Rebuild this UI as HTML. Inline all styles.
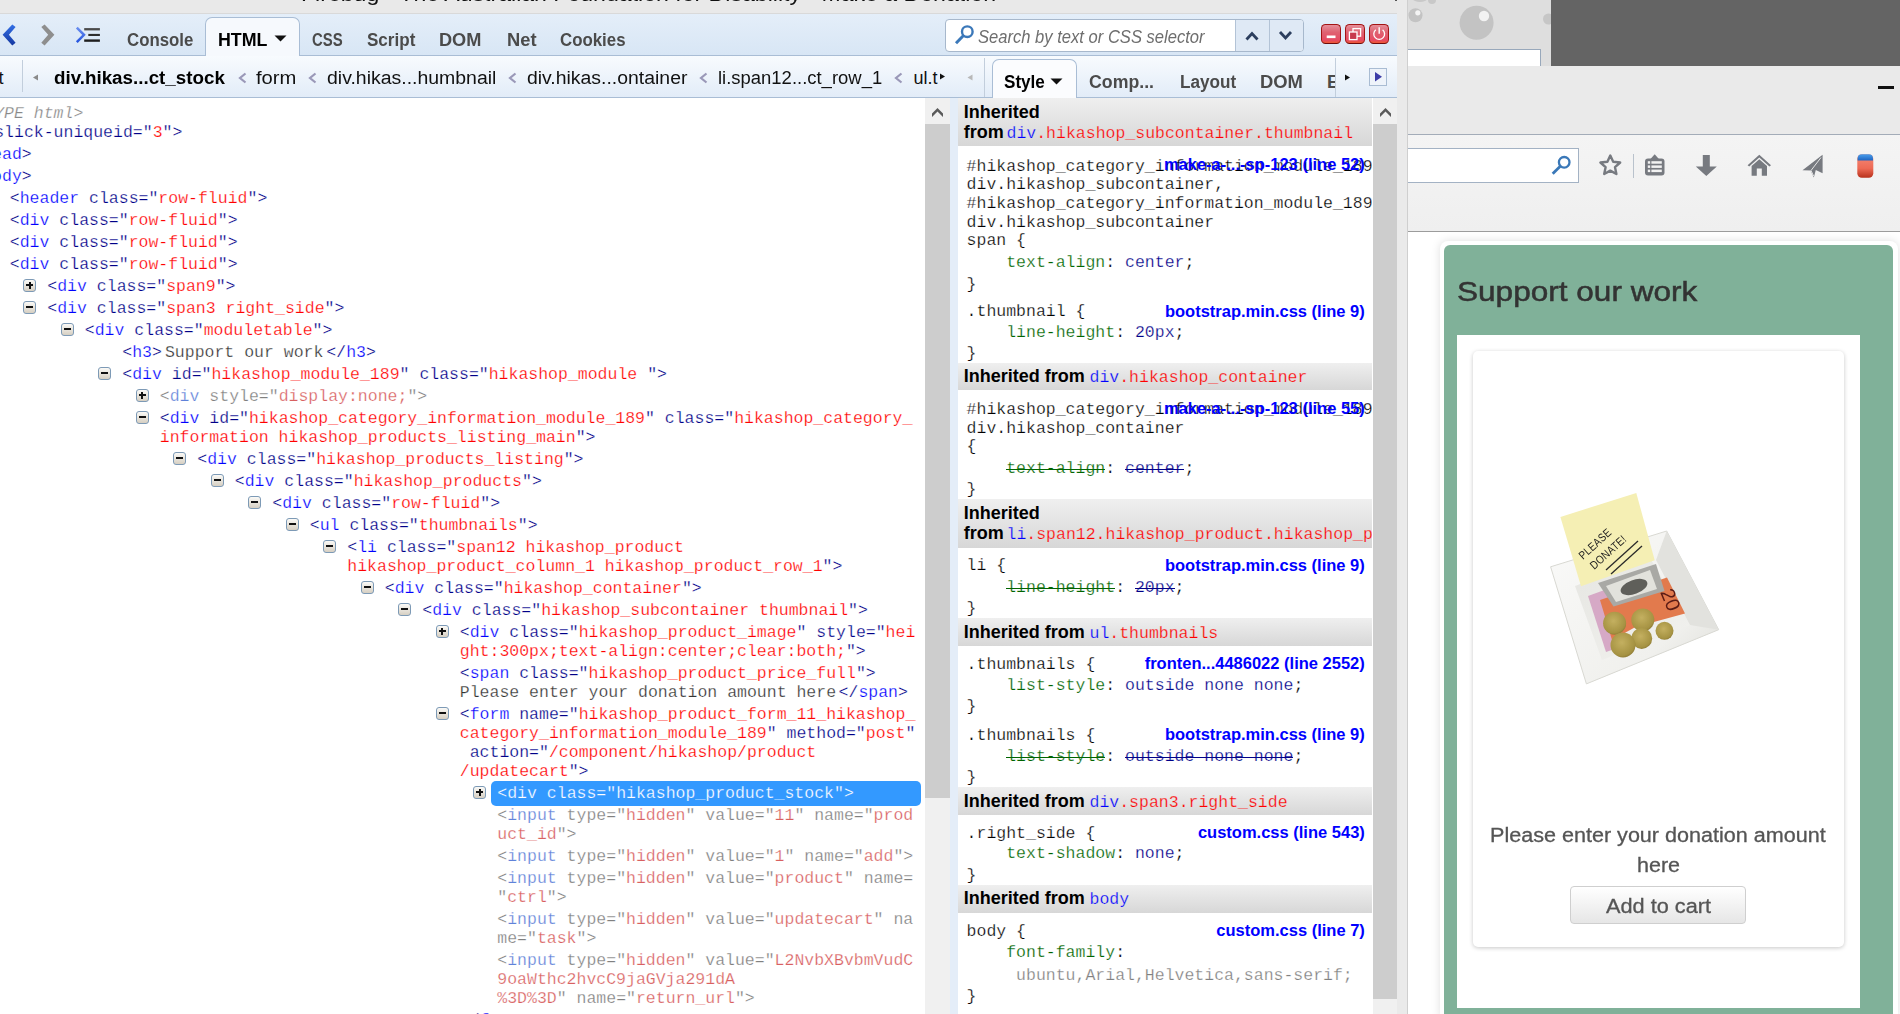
<!DOCTYPE html>
<html><head><meta charset="utf-8"><title>Firebug</title>
<style>html,body{margin:0;padding:0;width:1900px;height:1014px;overflow:hidden;background:#fff;position:relative}
body{font-family:"Liberation Sans",sans-serif}</style></head>
<body>
<div style="position:absolute;left:0px;top:0px;width:1397px;height:14px;background:#e9e9e9;"></div>
<div style="position:absolute;left:0px;top:13px;width:1397px;height:1px;background:#d9d9d9;"></div>
<div style="position:absolute;top:-6.50px;font-family:'Liberation Sans';font-size:20px;line-height:0;white-space:pre;left:301.00px;color:#111;transform:scaleX(1.1542);transform-origin:0 0;">Firebug - The Australian Foundation for Disability - Make a Donation</div>
<div style="position:absolute;left:0px;top:14px;width:1397px;height:41px;background:linear-gradient(#e4eef9,#d8e6f5);"></div>
<div style="position:absolute;left:0px;top:55px;width:1397px;height:1px;background:#a9bdd5;"></div>
<div style="position:absolute;left:205px;top:17px;width:95px;height:39px;background:#f6f9fd;border:1px solid #a9bdd5;border-bottom:none;border-radius:7px 7px 0 0;box-sizing:border-box;"></div>
<svg style="position:absolute;left:0;top:14px" width="110" height="41" viewBox="0 14 110 41">
<defs><linearGradient id="gblue" x1="0" y1="0" x2="0" y2="1"><stop offset="0" stop-color="#3470e6"/><stop offset="1" stop-color="#1437a0"/></linearGradient>
<linearGradient id="gblue2" x1="0" y1="0" x2="0" y2="1"><stop offset="0" stop-color="#6a8ef0"/><stop offset="1" stop-color="#2453de"/></linearGradient></defs>
<polygon points="2.6,34.8 12.3,24.4 15.6,27 8.9,34.8 15.6,42.7 12.3,45.4" fill="url(#gblue)"/>
<polygon points="54.4,34.8 44.6,24.4 41.3,27 48.2,34.8 41.3,42.7 44.6,45.4" fill="#8e8e8e"/>
<polyline points="76.8,27.6 84,34.8 76.8,42.2" fill="none" stroke="url(#gblue2)" stroke-width="2.5"/>
<rect x="84.2" y="28.1" width="15.7" height="2.3" fill="#4a4a4a"/>
<rect x="88.3" y="33.9" width="11.6" height="2.1" fill="#2e2e2e"/>
<rect x="84.2" y="39.4" width="15.7" height="2.4" fill="#1e1e1e"/>
</svg>
<div style="position:absolute;top:39.80px;font-family:'Liberation Sans';font-size:18px;line-height:0;white-space:pre;font-weight:bold;left:127.40px;color:#4b4b4b;transform:scaleX(0.9338);transform-origin:0 0;">Console</div>
<div style="position:absolute;top:39.80px;font-family:'Liberation Sans';font-size:18px;line-height:0;white-space:pre;font-weight:bold;left:217.90px;color:#000;transform:scaleX(0.9900);transform-origin:0 0;">HTML</div>
<svg style="position:absolute;left:274px;top:35px" width="13" height="7"><polygon points="0.5,0.5 12.5,0.5 6.5,6.5" fill="#111"/></svg>
<div style="position:absolute;top:39.80px;font-family:'Liberation Sans';font-size:18px;line-height:0;white-space:pre;font-weight:bold;left:312.20px;color:#4b4b4b;transform:scaleX(0.8297);transform-origin:0 0;">CSS</div>
<div style="position:absolute;top:39.80px;font-family:'Liberation Sans';font-size:18px;line-height:0;white-space:pre;font-weight:bold;left:366.50px;color:#4b4b4b;transform:scaleX(0.9471);transform-origin:0 0;">Script</div>
<div style="position:absolute;top:39.80px;font-family:'Liberation Sans';font-size:18px;line-height:0;white-space:pre;font-weight:bold;left:439.20px;color:#4b4b4b;transform:scaleX(1.0095);transform-origin:0 0;">DOM</div>
<div style="position:absolute;top:39.80px;font-family:'Liberation Sans';font-size:18px;line-height:0;white-space:pre;font-weight:bold;left:506.60px;color:#4b4b4b;transform:scaleX(1.0172);transform-origin:0 0;">Net</div>
<div style="position:absolute;top:39.80px;font-family:'Liberation Sans';font-size:18px;line-height:0;white-space:pre;font-weight:bold;left:559.70px;color:#4b4b4b;transform:scaleX(0.9357);transform-origin:0 0;">Cookies</div>
<div style="position:absolute;left:945px;top:19px;width:359px;height:33px;background:#fff;border:1px solid #a7b8cc;border-radius:4px;box-sizing:border-box;"></div>
<div style="position:absolute;left:1235px;top:20px;width:68px;height:31px;background:#dfe9f5;border-left:1px solid #b3c3d6;box-sizing:border-box;border-radius:0 3px 3px 0;"></div>
<div style="position:absolute;left:1269px;top:20px;width:1px;height:31px;background:#b3c3d6;"></div>
<svg style="position:absolute;left:950px;top:22px" width="30" height="26" viewBox="950 22 30 26">
<circle cx="967.3" cy="31.7" r="5.3" fill="none" stroke="#3b78b9" stroke-width="2.4"/>
<line x1="963.5" y1="35.5" x2="956" y2="43.3" stroke="#3b78b9" stroke-width="3" stroke-linecap="butt"/>
</svg>
<div style="position:absolute;top:36.80px;font-family:'Liberation Sans';font-size:18px;line-height:0;white-space:pre;font-style:italic;left:978.30px;color:#6e6e6e;transform:scaleX(0.9208);transform-origin:0 0;">Search by text or CSS selector</div>
<svg style="position:absolute;left:1235px;top:20px" width="68" height="31" viewBox="1235 20 68 31">
<polyline points="1246.5,39.5 1252,33.5 1257.5,39.5" fill="none" stroke="#2c3e5e" stroke-width="2.8"/>
<polyline points="1280,32 1285.5,38 1291,32" fill="none" stroke="#2c3e5e" stroke-width="2.8"/>
</svg>
<div style="position:absolute;left:1320.8px;top:23.8px;width:20.3px;height:20px;background:linear-gradient(#e58f9a,#df6272 40%,#e64a62 85%,#ee5a34);border:1.8px solid #a31414;border-bottom-color:#6e0c0c;border-radius:4.5px;box-sizing:border-box;"></div>
<div style="position:absolute;left:1344.8px;top:23.8px;width:20.3px;height:20px;background:linear-gradient(#e58f9a,#df6272 40%,#e64a62 85%,#ee5a34);border:1.8px solid #a31414;border-bottom-color:#6e0c0c;border-radius:4.5px;box-sizing:border-box;"></div>
<div style="position:absolute;left:1368.8px;top:23.8px;width:20.3px;height:20px;background:linear-gradient(#e58f9a,#df6272 40%,#e64a62 85%,#ee5a34);border:1.8px solid #a31414;border-bottom-color:#6e0c0c;border-radius:4.5px;box-sizing:border-box;"></div>
<svg style="position:absolute;left:1321px;top:24px" width="69" height="20" viewBox="1321 24 69 20">
<rect x="1326.7" y="35.5" width="8.8" height="2.6" fill="#fff"/>
<rect x="1353" y="28.6" width="7.6" height="7.6" fill="none" stroke="#fff" stroke-width="1.3"/>
<rect x="1349.4" y="32" width="7.6" height="7.6" fill="#c83a4e" stroke="#fff" stroke-width="1.3"/>
<path d="M1375.8,29.8 A5.4,5.4 0 1 0 1382.6,29.8" fill="none" stroke="#fff" stroke-width="1.3"/>
<line x1="1379.2" y1="27.2" x2="1379.2" y2="33.8" stroke="#fff" stroke-width="1.4"/>
</svg>
<div style="position:absolute;left:0px;top:56px;width:1397px;height:41px;background:linear-gradient(#f8fbfe,#e2ecf8);"></div>
<div style="position:absolute;left:0px;top:97px;width:1397px;height:1px;background:#a9bdd5;"></div>
<div style="position:absolute;top:77.60px;font-family:'Liberation Sans';font-size:18px;line-height:0;white-space:pre;left:-1.50px;color:#111;">t</div>
<div style="position:absolute;left:22px;top:60px;width:1px;height:32px;background:#c2cedc;"></div>
<svg style="position:absolute;left:32px;top:74px" width="8" height="8"><polygon points="1,3.5 6,0.5 6,6.5" fill="#8a8a8a"/></svg>
<div style="position:absolute;top:77.60px;font-family:'Liberation Sans';font-size:18px;line-height:0;white-space:pre;font-weight:bold;left:54.00px;color:#000;transform:scaleX(1.0435);transform-origin:0 0;">div.hikas...ct_stock</div>
<svg style="position:absolute;left:237.5px;top:72px" width="10" height="12"><polyline points="7.5,1.5 2,6 7.5,10.5" fill="none" stroke="#9a98b8" stroke-width="2.2"/></svg>
<svg style="position:absolute;left:308px;top:72px" width="10" height="12"><polyline points="7.5,1.5 2,6 7.5,10.5" fill="none" stroke="#9a98b8" stroke-width="2.2"/></svg>
<svg style="position:absolute;left:508px;top:72px" width="10" height="12"><polyline points="7.5,1.5 2,6 7.5,10.5" fill="none" stroke="#9a98b8" stroke-width="2.2"/></svg>
<svg style="position:absolute;left:699px;top:72px" width="10" height="12"><polyline points="7.5,1.5 2,6 7.5,10.5" fill="none" stroke="#9a98b8" stroke-width="2.2"/></svg>
<svg style="position:absolute;left:893.5px;top:72px" width="10" height="12"><polyline points="7.5,1.5 2,6 7.5,10.5" fill="none" stroke="#9a98b8" stroke-width="2.2"/></svg>
<div style="position:absolute;top:77.60px;font-family:'Liberation Sans';font-size:18px;line-height:0;white-space:pre;left:255.60px;color:#111;transform:scaleX(1.1222);transform-origin:0 0;">form</div>
<div style="position:absolute;top:77.60px;font-family:'Liberation Sans';font-size:18px;line-height:0;white-space:pre;left:326.80px;color:#111;transform:scaleX(1.0807);transform-origin:0 0;">div.hikas...humbnail</div>
<div style="position:absolute;top:77.60px;font-family:'Liberation Sans';font-size:18px;line-height:0;white-space:pre;left:526.80px;color:#111;transform:scaleX(1.0783);transform-origin:0 0;">div.hikas...ontainer</div>
<div style="position:absolute;top:77.60px;font-family:'Liberation Sans';font-size:18px;line-height:0;white-space:pre;left:717.70px;color:#111;transform:scaleX(1.0254);transform-origin:0 0;">li.span12...ct_row_1</div>
<div style="position:absolute;left:905px;top:60px;width:33px;height:36px;overflow:hidden">
<div style="position:absolute;top:17.60px;font-family:'Liberation Sans';font-size:18px;line-height:0;white-space:pre;left:8.50px;color:#111;">ul.thumbnails</div>
</div>
<svg style="position:absolute;left:939px;top:73px" width="8" height="8"><polygon points="1,0.5 6,3.5 1,6.5" fill="#111"/></svg>
<svg style="position:absolute;left:966px;top:74px" width="8" height="8"><polygon points="1.5,3.5 6.5,0.5 6.5,6.5" fill="#b8b8b8"/></svg>
<div style="position:absolute;left:984px;top:58px;width:1px;height:39px;background:#c2cedc;"></div>
<div style="position:absolute;left:992px;top:59px;width:85px;height:39px;background:#fbfcfe;border:1px solid #a9bdd5;border-bottom:none;border-radius:7px 7px 0 0;box-sizing:border-box;"></div>
<div style="position:absolute;top:81.70px;font-family:'Liberation Sans';font-size:18px;line-height:0;white-space:pre;font-weight:bold;left:1003.70px;color:#000;transform:scaleX(0.9488);transform-origin:0 0;">Style</div>
<svg style="position:absolute;left:1050px;top:78px" width="14" height="8"><polygon points="0.5,0.5 12.5,0.5 6.5,6.5" fill="#111"/></svg>
<div style="position:absolute;top:81.70px;font-family:'Liberation Sans';font-size:18px;line-height:0;white-space:pre;font-weight:bold;left:1089.00px;color:#4b4b4b;transform:scaleX(0.9848);transform-origin:0 0;">Comp...</div>
<div style="position:absolute;top:81.70px;font-family:'Liberation Sans';font-size:18px;line-height:0;white-space:pre;font-weight:bold;left:1179.70px;color:#4b4b4b;transform:scaleX(0.9525);transform-origin:0 0;">Layout</div>
<div style="position:absolute;top:81.70px;font-family:'Liberation Sans';font-size:18px;line-height:0;white-space:pre;font-weight:bold;left:1259.60px;color:#4b4b4b;transform:scaleX(1.0214);transform-origin:0 0;">DOM</div>
<div style="position:absolute;left:1320px;top:60px;width:14.5px;height:36px;overflow:hidden">
<div style="position:absolute;top:21.70px;font-family:'Liberation Sans';font-size:18px;line-height:0;white-space:pre;font-weight:bold;left:7.00px;color:#4b4b4b;">Events</div>
</div>
<div style="position:absolute;left:1334.5px;top:58px;width:1px;height:39px;background:#c2cedc;"></div>
<svg style="position:absolute;left:1344px;top:74px" width="8" height="8"><polygon points="1,0.5 6,3.5 1,6.5" fill="#111"/></svg>
<div style="position:absolute;left:1369px;top:68px;width:18px;height:17.5px;background:#eef3fa;border:1px solid #a9bcd3;box-sizing:border-box;"></div>
<svg style="position:absolute;left:1369px;top:68px" width="18" height="18"><polygon points="6,4 13,8.7 6,13.4" fill="#3d3da8"/></svg>
<div style="position:absolute;left:0;top:98px;width:925px;height:916px;background:#fff;overflow:hidden">
<div style="position:absolute;top:15.50px;font-family:'Liberation Mono';font-size:16.5px;line-height:0;white-space:pre;left:-5.80px;-webkit-text-stroke:0.25px #fff;"><span style="color:#888888;font-style:italic">YPE html&gt;</span></div>
<div style="position:absolute;top:34.50px;font-family:'Liberation Mono';font-size:16.5px;line-height:0;white-space:pre;left:-5.80px;-webkit-text-stroke:0.25px #fff;"><span style="color:#000088;">slick-uniqueid=&quot;</span><span style="color:#ff0000;">3</span><span style="color:#000088;">&quot;&gt;</span></div>
<div style="position:absolute;top:56.50px;font-family:'Liberation Mono';font-size:16.5px;line-height:0;white-space:pre;left:-27.70px;-webkit-text-stroke:0.25px #fff;"><span style="color:#000088;">&lt;</span><span style="color:#0000ff;">head</span><span style="color:#000088;">&gt;</span></div>
<div style="position:absolute;top:78.50px;font-family:'Liberation Mono';font-size:16.5px;line-height:0;white-space:pre;left:-27.70px;-webkit-text-stroke:0.25px #fff;"><span style="color:#000088;">&lt;</span><span style="color:#0000ff;">body</span><span style="color:#000088;">&gt;</span></div>
<div style="position:absolute;top:100.50px;font-family:'Liberation Mono';font-size:16.5px;line-height:0;white-space:pre;left:9.80px;-webkit-text-stroke:0.25px #fff;"><span style="color:#000088;">&lt;</span><span style="color:#0000ff;">header</span><span style="color:#000088;"> class=&quot;</span><span style="color:#ff0000;">row-fluid</span><span style="color:#000088;">&quot;</span><span style="color:#000088;">&gt;</span></div>
<div style="position:absolute;top:122.50px;font-family:'Liberation Mono';font-size:16.5px;line-height:0;white-space:pre;left:9.80px;-webkit-text-stroke:0.25px #fff;"><span style="color:#000088;">&lt;</span><span style="color:#0000ff;">div</span><span style="color:#000088;"> class=&quot;</span><span style="color:#ff0000;">row-fluid</span><span style="color:#000088;">&quot;</span><span style="color:#000088;">&gt;</span></div>
<div style="position:absolute;top:144.50px;font-family:'Liberation Mono';font-size:16.5px;line-height:0;white-space:pre;left:9.80px;-webkit-text-stroke:0.25px #fff;"><span style="color:#000088;">&lt;</span><span style="color:#0000ff;">div</span><span style="color:#000088;"> class=&quot;</span><span style="color:#ff0000;">row-fluid</span><span style="color:#000088;">&quot;</span><span style="color:#000088;">&gt;</span></div>
<div style="position:absolute;top:166.50px;font-family:'Liberation Mono';font-size:16.5px;line-height:0;white-space:pre;left:9.80px;-webkit-text-stroke:0.25px #fff;"><span style="color:#000088;">&lt;</span><span style="color:#0000ff;">div</span><span style="color:#000088;"> class=&quot;</span><span style="color:#ff0000;">row-fluid</span><span style="color:#000088;">&quot;</span><span style="color:#000088;">&gt;</span></div>
<div style="position:absolute;left:23.299999999999997px;top:180.5px;width:13px;height:13px;box-sizing:border-box;border:1.5px solid #7d9ab6;border-radius:3px;background:linear-gradient(#fbfaf7,#d6cfc2);"></div>
<div style="position:absolute;left:26.299999999999997px;top:186.0px;width:7px;height:2px;background:#111"></div>
<div style="position:absolute;left:28.799999999999997px;top:183.5px;width:2px;height:7px;background:#111"></div>
<div style="position:absolute;top:188.50px;font-family:'Liberation Mono';font-size:16.5px;line-height:0;white-space:pre;left:47.30px;-webkit-text-stroke:0.25px #fff;"><span style="color:#000088;">&lt;</span><span style="color:#0000ff;">div</span><span style="color:#000088;"> class=&quot;</span><span style="color:#ff0000;">span9</span><span style="color:#000088;">&quot;</span><span style="color:#000088;">&gt;</span></div>
<div style="position:absolute;left:23.299999999999997px;top:202.5px;width:13px;height:13px;box-sizing:border-box;border:1.5px solid #7d9ab6;border-radius:3px;background:linear-gradient(#fbfaf7,#d6cfc2);"></div>
<div style="position:absolute;left:26.299999999999997px;top:208.0px;width:7px;height:2px;background:#111"></div>
<div style="position:absolute;top:210.50px;font-family:'Liberation Mono';font-size:16.5px;line-height:0;white-space:pre;left:47.30px;-webkit-text-stroke:0.25px #fff;"><span style="color:#000088;">&lt;</span><span style="color:#0000ff;">div</span><span style="color:#000088;"> class=&quot;</span><span style="color:#ff0000;">span3 right_side</span><span style="color:#000088;">&quot;</span><span style="color:#000088;">&gt;</span></div>
<div style="position:absolute;left:60.8px;top:224.5px;width:13px;height:13px;box-sizing:border-box;border:1.5px solid #7d9ab6;border-radius:3px;background:linear-gradient(#fbfaf7,#d6cfc2);"></div>
<div style="position:absolute;left:63.8px;top:230.0px;width:7px;height:2px;background:#111"></div>
<div style="position:absolute;top:232.50px;font-family:'Liberation Mono';font-size:16.5px;line-height:0;white-space:pre;left:84.80px;-webkit-text-stroke:0.25px #fff;"><span style="color:#000088;">&lt;</span><span style="color:#0000ff;">div</span><span style="color:#000088;"> class=&quot;</span><span style="color:#ff0000;">moduletable</span><span style="color:#000088;">&quot;</span><span style="color:#000088;">&gt;</span></div>
<div style="position:absolute;top:254.50px;font-family:'Liberation Mono';font-size:16.5px;line-height:0;white-space:pre;left:122.30px;-webkit-text-stroke:0.25px #fff;"><span style="color:#000088;">&lt;</span><span style="color:#0000ff;">h3</span><span style="color:#000088;">&gt;</span><span style="color:#333333;margin:0 3px">Support our work</span><span style="color:#000088;">&lt;/</span><span style="color:#0000ff;">h3</span><span style="color:#000088;">&gt;</span></div>
<div style="position:absolute;left:98.3px;top:268.5px;width:13px;height:13px;box-sizing:border-box;border:1.5px solid #7d9ab6;border-radius:3px;background:linear-gradient(#fbfaf7,#d6cfc2);"></div>
<div style="position:absolute;left:101.3px;top:274.0px;width:7px;height:2px;background:#111"></div>
<div style="position:absolute;top:276.50px;font-family:'Liberation Mono';font-size:16.5px;line-height:0;white-space:pre;left:122.30px;-webkit-text-stroke:0.25px #fff;"><span style="color:#000088;">&lt;</span><span style="color:#0000ff;">div</span><span style="color:#000088;"> id=&quot;</span><span style="color:#ff0000;">hikashop_module_189</span><span style="color:#000088;">&quot;</span><span style="color:#000088;"> class=&quot;</span><span style="color:#ff0000;">hikashop_module </span><span style="color:#000088;">&quot;</span><span style="color:#000088;">&gt;</span></div>
<div style="position:absolute;left:135.8px;top:290.5px;width:13px;height:13px;box-sizing:border-box;border:1.5px solid #7d9ab6;border-radius:3px;background:linear-gradient(#fbfaf7,#d6cfc2);"></div>
<div style="position:absolute;left:138.8px;top:296.0px;width:7px;height:2px;background:#111"></div>
<div style="position:absolute;left:141.3px;top:293.5px;width:2px;height:7px;background:#111"></div>
<div style="position:absolute;top:298.50px;font-family:'Liberation Mono';font-size:16.5px;line-height:0;white-space:pre;left:159.80px;-webkit-text-stroke:0.25px #fff;"><span style="color:#808080;">&lt;</span><span style="color:#5f82d9;">div</span><span style="color:#808080;"> style=&quot;</span><span style="color:#d86060;">display:none;</span><span style="color:#808080;">&quot;</span><span style="color:#808080;">&gt;</span></div>
<div style="position:absolute;left:135.8px;top:312.5px;width:13px;height:13px;box-sizing:border-box;border:1.5px solid #7d9ab6;border-radius:3px;background:linear-gradient(#fbfaf7,#d6cfc2);"></div>
<div style="position:absolute;left:138.8px;top:318.0px;width:7px;height:2px;background:#111"></div>
<div style="position:absolute;top:320.50px;font-family:'Liberation Mono';font-size:16.5px;line-height:0;white-space:pre;left:159.80px;-webkit-text-stroke:0.25px #fff;"><span style="color:#000088;">&lt;</span><span style="color:#0000ff;">div</span><span style="color:#000088;"> id=&quot;</span><span style="color:#ff0000;">hikashop_category_information_module_189</span><span style="color:#000088;">&quot; class=&quot;</span><span style="color:#ff0000;">hikashop_category_</span></div>
<div style="position:absolute;top:339.50px;font-family:'Liberation Mono';font-size:16.5px;line-height:0;white-space:pre;left:159.80px;-webkit-text-stroke:0.25px #fff;"><span style="color:#ff0000;">information hikashop_products_listing_main</span><span style="color:#000088;">&quot;&gt;</span></div>
<div style="position:absolute;left:173.3px;top:353.5px;width:13px;height:13px;box-sizing:border-box;border:1.5px solid #7d9ab6;border-radius:3px;background:linear-gradient(#fbfaf7,#d6cfc2);"></div>
<div style="position:absolute;left:176.3px;top:359.0px;width:7px;height:2px;background:#111"></div>
<div style="position:absolute;top:361.50px;font-family:'Liberation Mono';font-size:16.5px;line-height:0;white-space:pre;left:197.30px;-webkit-text-stroke:0.25px #fff;"><span style="color:#000088;">&lt;</span><span style="color:#0000ff;">div</span><span style="color:#000088;"> class=&quot;</span><span style="color:#ff0000;">hikashop_products_listing</span><span style="color:#000088;">&quot;</span><span style="color:#000088;">&gt;</span></div>
<div style="position:absolute;left:210.8px;top:375.5px;width:13px;height:13px;box-sizing:border-box;border:1.5px solid #7d9ab6;border-radius:3px;background:linear-gradient(#fbfaf7,#d6cfc2);"></div>
<div style="position:absolute;left:213.8px;top:381.0px;width:7px;height:2px;background:#111"></div>
<div style="position:absolute;top:383.50px;font-family:'Liberation Mono';font-size:16.5px;line-height:0;white-space:pre;left:234.80px;-webkit-text-stroke:0.25px #fff;"><span style="color:#000088;">&lt;</span><span style="color:#0000ff;">div</span><span style="color:#000088;"> class=&quot;</span><span style="color:#ff0000;">hikashop_products</span><span style="color:#000088;">&quot;</span><span style="color:#000088;">&gt;</span></div>
<div style="position:absolute;left:248.3px;top:397.5px;width:13px;height:13px;box-sizing:border-box;border:1.5px solid #7d9ab6;border-radius:3px;background:linear-gradient(#fbfaf7,#d6cfc2);"></div>
<div style="position:absolute;left:251.3px;top:403.0px;width:7px;height:2px;background:#111"></div>
<div style="position:absolute;top:405.50px;font-family:'Liberation Mono';font-size:16.5px;line-height:0;white-space:pre;left:272.30px;-webkit-text-stroke:0.25px #fff;"><span style="color:#000088;">&lt;</span><span style="color:#0000ff;">div</span><span style="color:#000088;"> class=&quot;</span><span style="color:#ff0000;">row-fluid</span><span style="color:#000088;">&quot;</span><span style="color:#000088;">&gt;</span></div>
<div style="position:absolute;left:285.8px;top:419.5px;width:13px;height:13px;box-sizing:border-box;border:1.5px solid #7d9ab6;border-radius:3px;background:linear-gradient(#fbfaf7,#d6cfc2);"></div>
<div style="position:absolute;left:288.8px;top:425.0px;width:7px;height:2px;background:#111"></div>
<div style="position:absolute;top:427.50px;font-family:'Liberation Mono';font-size:16.5px;line-height:0;white-space:pre;left:309.80px;-webkit-text-stroke:0.25px #fff;"><span style="color:#000088;">&lt;</span><span style="color:#0000ff;">ul</span><span style="color:#000088;"> class=&quot;</span><span style="color:#ff0000;">thumbnails</span><span style="color:#000088;">&quot;</span><span style="color:#000088;">&gt;</span></div>
<div style="position:absolute;left:323.3px;top:441.5px;width:13px;height:13px;box-sizing:border-box;border:1.5px solid #7d9ab6;border-radius:3px;background:linear-gradient(#fbfaf7,#d6cfc2);"></div>
<div style="position:absolute;left:326.3px;top:447.0px;width:7px;height:2px;background:#111"></div>
<div style="position:absolute;top:449.50px;font-family:'Liberation Mono';font-size:16.5px;line-height:0;white-space:pre;left:347.30px;-webkit-text-stroke:0.25px #fff;"><span style="color:#000088;">&lt;</span><span style="color:#0000ff;">li</span><span style="color:#000088;"> class=&quot;</span><span style="color:#ff0000;">span12 hikashop_product</span></div>
<div style="position:absolute;top:468.50px;font-family:'Liberation Mono';font-size:16.5px;line-height:0;white-space:pre;left:347.30px;-webkit-text-stroke:0.25px #fff;"><span style="color:#ff0000;">hikashop_product_column_1 hikashop_product_row_1</span><span style="color:#000088;">&quot;&gt;</span></div>
<div style="position:absolute;left:360.8px;top:482.5px;width:13px;height:13px;box-sizing:border-box;border:1.5px solid #7d9ab6;border-radius:3px;background:linear-gradient(#fbfaf7,#d6cfc2);"></div>
<div style="position:absolute;left:363.8px;top:488.0px;width:7px;height:2px;background:#111"></div>
<div style="position:absolute;top:490.50px;font-family:'Liberation Mono';font-size:16.5px;line-height:0;white-space:pre;left:384.80px;-webkit-text-stroke:0.25px #fff;"><span style="color:#000088;">&lt;</span><span style="color:#0000ff;">div</span><span style="color:#000088;"> class=&quot;</span><span style="color:#ff0000;">hikashop_container</span><span style="color:#000088;">&quot;</span><span style="color:#000088;">&gt;</span></div>
<div style="position:absolute;left:398.3px;top:504.5px;width:13px;height:13px;box-sizing:border-box;border:1.5px solid #7d9ab6;border-radius:3px;background:linear-gradient(#fbfaf7,#d6cfc2);"></div>
<div style="position:absolute;left:401.3px;top:510.0px;width:7px;height:2px;background:#111"></div>
<div style="position:absolute;top:512.50px;font-family:'Liberation Mono';font-size:16.5px;line-height:0;white-space:pre;left:422.30px;-webkit-text-stroke:0.25px #fff;"><span style="color:#000088;">&lt;</span><span style="color:#0000ff;">div</span><span style="color:#000088;"> class=&quot;</span><span style="color:#ff0000;">hikashop_subcontainer thumbnail</span><span style="color:#000088;">&quot;</span><span style="color:#000088;">&gt;</span></div>
<div style="position:absolute;left:435.8px;top:526.5px;width:13px;height:13px;box-sizing:border-box;border:1.5px solid #7d9ab6;border-radius:3px;background:linear-gradient(#fbfaf7,#d6cfc2);"></div>
<div style="position:absolute;left:438.8px;top:532.0px;width:7px;height:2px;background:#111"></div>
<div style="position:absolute;left:441.3px;top:529.5px;width:2px;height:7px;background:#111"></div>
<div style="position:absolute;top:534.50px;font-family:'Liberation Mono';font-size:16.5px;line-height:0;white-space:pre;left:459.80px;-webkit-text-stroke:0.25px #fff;"><span style="color:#000088;">&lt;</span><span style="color:#0000ff;">div</span><span style="color:#000088;"> class=&quot;</span><span style="color:#ff0000;">hikashop_product_image</span><span style="color:#000088;">&quot; style=&quot;</span><span style="color:#ff0000;">hei</span></div>
<div style="position:absolute;top:553.50px;font-family:'Liberation Mono';font-size:16.5px;line-height:0;white-space:pre;left:459.80px;-webkit-text-stroke:0.25px #fff;"><span style="color:#ff0000;">ght:300px;text-align:center;clear:both;</span><span style="color:#000088;">&quot;&gt;</span></div>
<div style="position:absolute;top:575.50px;font-family:'Liberation Mono';font-size:16.5px;line-height:0;white-space:pre;left:459.80px;-webkit-text-stroke:0.25px #fff;"><span style="color:#000088;">&lt;</span><span style="color:#0000ff;">span</span><span style="color:#000088;"> class=&quot;</span><span style="color:#ff0000;">hikashop_product_price_full</span><span style="color:#000088;">&quot;&gt;</span></div>
<div style="position:absolute;top:594.50px;font-family:'Liberation Mono';font-size:16.5px;line-height:0;white-space:pre;left:459.80px;-webkit-text-stroke:0.25px #fff;"><span style="color:#333333;margin-right:2.5px">Please enter your donation amount here</span><span style="color:#000088;">&lt;/</span><span style="color:#0000ff;">span</span><span style="color:#000088;">&gt;</span></div>
<div style="position:absolute;left:435.8px;top:608.5px;width:13px;height:13px;box-sizing:border-box;border:1.5px solid #7d9ab6;border-radius:3px;background:linear-gradient(#fbfaf7,#d6cfc2);"></div>
<div style="position:absolute;left:438.8px;top:614.0px;width:7px;height:2px;background:#111"></div>
<div style="position:absolute;top:616.50px;font-family:'Liberation Mono';font-size:16.5px;line-height:0;white-space:pre;left:459.80px;-webkit-text-stroke:0.25px #fff;"><span style="color:#000088;">&lt;</span><span style="color:#0000ff;">form</span><span style="color:#000088;"> name=&quot;</span><span style="color:#ff0000;">hikashop_product_form_11_hikashop_</span></div>
<div style="position:absolute;top:635.50px;font-family:'Liberation Mono';font-size:16.5px;line-height:0;white-space:pre;left:459.80px;-webkit-text-stroke:0.25px #fff;"><span style="color:#ff0000;">category_information_module_189</span><span style="color:#000088;">&quot; method=&quot;</span><span style="color:#ff0000;">post</span><span style="color:#000088;">&quot;</span></div>
<div style="position:absolute;top:654.50px;font-family:'Liberation Mono';font-size:16.5px;line-height:0;white-space:pre;left:459.80px;-webkit-text-stroke:0.25px #fff;"><span style="color:#000088;"> action=&quot;</span><span style="color:#ff0000;">/component/hikashop/product</span></div>
<div style="position:absolute;top:673.50px;font-family:'Liberation Mono';font-size:16.5px;line-height:0;white-space:pre;left:459.80px;-webkit-text-stroke:0.25px #fff;"><span style="color:#ff0000;">/updatecart</span><span style="color:#000088;">&quot;&gt;</span></div>
<div style="position:absolute;left:491px;top:683px;width:430px;height:25px;background:#3399ff;border-radius:5px"></div>
<div style="position:absolute;left:473.3px;top:687.5px;width:13px;height:13px;box-sizing:border-box;border:1.5px solid #7d9ab6;border-radius:3px;background:linear-gradient(#fbfaf7,#d6cfc2);"></div>
<div style="position:absolute;left:476.3px;top:693.0px;width:7px;height:2px;background:#111"></div>
<div style="position:absolute;left:478.8px;top:690.5px;width:2px;height:7px;background:#111"></div>
<div style="position:absolute;top:695.50px;font-family:'Liberation Mono';font-size:16.5px;line-height:0;white-space:pre;left:497.30px;-webkit-text-stroke:0.25px #3399ff;"><span style="color:#fff;">&lt;</span><span style="color:#fff;">div</span><span style="color:#fff;"> class=&quot;</span><span style="color:#fff;">hikashop_product_stock</span><span style="color:#fff;">&quot;</span><span style="color:#fff;">&gt;</span></div>
<div style="position:absolute;top:717.50px;font-family:'Liberation Mono';font-size:16.5px;line-height:0;white-space:pre;left:497.30px;-webkit-text-stroke:0.25px #fff;"><span style="color:#808080;">&lt;</span><span style="color:#5f82d9;">input</span><span style="color:#808080;"> type=&quot;</span><span style="color:#d86060;">hidden</span><span style="color:#808080;">&quot; value=&quot;</span><span style="color:#d86060;">11</span><span style="color:#808080;">&quot; name=&quot;</span><span style="color:#d86060;">prod</span></div>
<div style="position:absolute;top:736.50px;font-family:'Liberation Mono';font-size:16.5px;line-height:0;white-space:pre;left:497.30px;-webkit-text-stroke:0.25px #fff;"><span style="color:#d86060;">uct_id</span><span style="color:#808080;">&quot;&gt;</span></div>
<div style="position:absolute;top:758.50px;font-family:'Liberation Mono';font-size:16.5px;line-height:0;white-space:pre;left:497.30px;-webkit-text-stroke:0.25px #fff;"><span style="color:#808080;">&lt;</span><span style="color:#5f82d9;">input</span><span style="color:#808080;"> type=&quot;</span><span style="color:#d86060;">hidden</span><span style="color:#808080;">&quot;</span><span style="color:#808080;"> value=&quot;</span><span style="color:#d86060;">1</span><span style="color:#808080;">&quot;</span><span style="color:#808080;"> name=&quot;</span><span style="color:#d86060;">add</span><span style="color:#808080;">&quot;</span><span style="color:#808080;">&gt;</span></div>
<div style="position:absolute;top:780.50px;font-family:'Liberation Mono';font-size:16.5px;line-height:0;white-space:pre;left:497.30px;-webkit-text-stroke:0.25px #fff;"><span style="color:#808080;">&lt;</span><span style="color:#5f82d9;">input</span><span style="color:#808080;"> type=&quot;</span><span style="color:#d86060;">hidden</span><span style="color:#808080;">&quot; value=&quot;</span><span style="color:#d86060;">product</span><span style="color:#808080;">&quot; name=</span></div>
<div style="position:absolute;top:799.50px;font-family:'Liberation Mono';font-size:16.5px;line-height:0;white-space:pre;left:497.30px;-webkit-text-stroke:0.25px #fff;"><span style="color:#808080;">&quot;</span><span style="color:#d86060;">ctrl</span><span style="color:#808080;">&quot;&gt;</span></div>
<div style="position:absolute;top:821.50px;font-family:'Liberation Mono';font-size:16.5px;line-height:0;white-space:pre;left:497.30px;-webkit-text-stroke:0.25px #fff;"><span style="color:#808080;">&lt;</span><span style="color:#5f82d9;">input</span><span style="color:#808080;"> type=&quot;</span><span style="color:#d86060;">hidden</span><span style="color:#808080;">&quot; value=&quot;</span><span style="color:#d86060;">updatecart</span><span style="color:#808080;">&quot; na</span></div>
<div style="position:absolute;top:840.50px;font-family:'Liberation Mono';font-size:16.5px;line-height:0;white-space:pre;left:497.30px;-webkit-text-stroke:0.25px #fff;"><span style="color:#808080;">me=&quot;</span><span style="color:#d86060;">task</span><span style="color:#808080;">&quot;&gt;</span></div>
<div style="position:absolute;top:862.50px;font-family:'Liberation Mono';font-size:16.5px;line-height:0;white-space:pre;left:497.30px;-webkit-text-stroke:0.25px #fff;"><span style="color:#808080;">&lt;</span><span style="color:#5f82d9;">input</span><span style="color:#808080;"> type=&quot;</span><span style="color:#d86060;">hidden</span><span style="color:#808080;">&quot; value=&quot;</span><span style="color:#d86060;">L2NvbXBvbmVudC</span></div>
<div style="position:absolute;top:881.50px;font-family:'Liberation Mono';font-size:16.5px;line-height:0;white-space:pre;left:497.30px;-webkit-text-stroke:0.25px #fff;"><span style="color:#d86060;">9oaWthc2hvcC9jaGVja291dA</span></div>
<div style="position:absolute;top:900.50px;font-family:'Liberation Mono';font-size:16.5px;line-height:0;white-space:pre;left:497.30px;-webkit-text-stroke:0.25px #fff;"><span style="color:#d86060;">%3D%3D</span><span style="color:#808080;">&quot; name=&quot;</span><span style="color:#d86060;">return_url</span><span style="color:#808080;">&quot;&gt;</span></div>
<div style="position:absolute;top:922.50px;font-family:'Liberation Mono';font-size:16.5px;line-height:0;white-space:pre;left:459.80px;-webkit-text-stroke:0.25px #fff;"><span style="color:#000088;">&lt;/</span><span style="color:#0000ff;">form</span><span style="color:#000088;">&gt;</span></div>
</div>
<div style="position:absolute;left:925px;top:98px;width:25px;height:916px;background:#f0f0f0;"></div>
<div style="position:absolute;left:925px;top:124px;width:25px;height:674px;background:#cdcdcd;"></div>
<svg style="position:absolute;left:925px;top:98px" width="25" height="26" viewBox="925 98 25 26"><polygon points="932,117 932,113.6 937.5,108 943,113.6 943,117 937.5,111.6" fill="#5a5a5a"/></svg>
<div style="position:absolute;left:950px;top:98px;width:8px;height:916px;background:#e4edf8;"></div>
<div style="position:absolute;left:958px;top:98px;width:414px;height:916px;background:#fff;overflow:hidden">
<div style="position:absolute;left:0;top:0.29999999999999716px;width:414px;height:48.10000000000001px;background:linear-gradient(#efefef,#d7d7d7)"></div>
<div style="position:absolute;top:13.70px;font-family:'Liberation Sans';font-size:18px;line-height:0;white-space:pre;font-weight:bold;left:5.80px;color:#000;">Inherited</div>
<div style="position:absolute;top:34.30px;font-family:'Liberation Sans';font-size:18px;line-height:0;white-space:pre;font-weight:bold;left:5.80px;color:#000;">from</div>
<div style="position:absolute;top:36.30px;font-family:'Liberation Mono';font-size:16.5px;line-height:0;white-space:pre;left:48.50px;-webkit-text-stroke:0.25px #e0e0e0;"><span style="color:#0000ff;">div</span><span style="color:#ff0000;">.hikashop_subcontainer.thumbnail</span></div>
<div style="position:absolute;top:68.60px;font-family:'Liberation Mono';font-size:16.5px;line-height:0;white-space:pre;left:8.60px;-webkit-text-stroke:0.25px #fff;"><span style="color:#000;">#hikashop_category_information_module_189</span></div>
<div style="position:absolute;top:66.00px;font-family:'Liberation Sans';font-size:16.5px;line-height:0;white-space:pre;font-weight:bold;left:205.92px;color:#0000ff;">make-a-...-sp-123 (line 52)</div>
<div style="position:absolute;top:87.30px;font-family:'Liberation Mono';font-size:16.5px;line-height:0;white-space:pre;left:8.60px;-webkit-text-stroke:0.25px #fff;"><span style="color:#000;">div.hikashop_subcontainer,</span></div>
<div style="position:absolute;top:106.00px;font-family:'Liberation Mono';font-size:16.5px;line-height:0;white-space:pre;left:8.60px;-webkit-text-stroke:0.25px #fff;"><span style="color:#000;">#hikashop_category_information_module_189</span></div>
<div style="position:absolute;top:124.70px;font-family:'Liberation Mono';font-size:16.5px;line-height:0;white-space:pre;left:8.60px;-webkit-text-stroke:0.25px #fff;"><span style="color:#000;">div.hikashop_subcontainer</span></div>
<div style="position:absolute;top:143.40px;font-family:'Liberation Mono';font-size:16.5px;line-height:0;white-space:pre;left:8.60px;-webkit-text-stroke:0.25px #fff;"><span style="color:#000;">span {</span></div>
<div style="position:absolute;top:165.10px;font-family:'Liberation Mono';font-size:16.5px;line-height:0;white-space:pre;left:8.60px;-webkit-text-stroke:0.25px #fff;"><span style="color:#000;">    </span><span style="color:#006400;">text-align</span><span style="color:#000;">: </span><span style="color:#000088;">center</span><span style="color:#000;">;</span></div>
<div style="position:absolute;top:186.50px;font-family:'Liberation Mono';font-size:16.5px;line-height:0;white-space:pre;left:8.60px;-webkit-text-stroke:0.25px #fff;"><span style="color:#000;">}</span></div>
<div style="position:absolute;top:214.00px;font-family:'Liberation Mono';font-size:16.5px;line-height:0;white-space:pre;left:8.60px;-webkit-text-stroke:0.25px #fff;"><span style="color:#000;">.thumbnail {</span></div>
<div style="position:absolute;top:212.50px;font-family:'Liberation Sans';font-size:16.5px;line-height:0;white-space:pre;font-weight:bold;left:206.92px;color:#0000ff;">bootstrap.min.css (line 9)</div>
<div style="position:absolute;top:234.60px;font-family:'Liberation Mono';font-size:16.5px;line-height:0;white-space:pre;left:8.60px;-webkit-text-stroke:0.25px #fff;"><span style="color:#000;">    </span><span style="color:#006400;">line-height</span><span style="color:#000;">: </span><span style="color:#000088;">20px</span><span style="color:#000;">;</span></div>
<div style="position:absolute;top:255.50px;font-family:'Liberation Mono';font-size:16.5px;line-height:0;white-space:pre;left:8.60px;-webkit-text-stroke:0.25px #fff;"><span style="color:#000;">}</span></div>
<div style="position:absolute;left:0;top:265.1px;width:414px;height:27.399999999999977px;background:linear-gradient(#efefef,#d7d7d7)"></div>
<div style="position:absolute;top:278.40px;font-family:'Liberation Sans';font-size:18px;line-height:0;white-space:pre;font-weight:bold;left:5.80px;color:#000;">Inherited from</div>
<div style="position:absolute;top:280.40px;font-family:'Liberation Mono';font-size:16.5px;line-height:0;white-space:pre;left:131.50px;-webkit-text-stroke:0.25px #e0e0e0;"><span style="color:#0000ff;">div</span><span style="color:#ff0000;">.hikashop_container</span></div>
<div style="position:absolute;top:312.20px;font-family:'Liberation Mono';font-size:16.5px;line-height:0;white-space:pre;left:8.60px;-webkit-text-stroke:0.25px #fff;"><span style="color:#000;">#hikashop_category_information_module_189</span></div>
<div style="position:absolute;top:310.00px;font-family:'Liberation Sans';font-size:16.5px;line-height:0;white-space:pre;font-weight:bold;left:205.92px;color:#0000ff;">make-a-...-sp-123 (line 55)</div>
<div style="position:absolute;top:330.80px;font-family:'Liberation Mono';font-size:16.5px;line-height:0;white-space:pre;left:8.60px;-webkit-text-stroke:0.25px #fff;"><span style="color:#000;">div.hikashop_container</span></div>
<div style="position:absolute;top:349.40px;font-family:'Liberation Mono';font-size:16.5px;line-height:0;white-space:pre;left:8.60px;-webkit-text-stroke:0.25px #fff;"><span style="color:#000;">{</span></div>
<div style="position:absolute;top:370.60px;font-family:'Liberation Mono';font-size:16.5px;line-height:0;white-space:pre;left:8.60px;-webkit-text-stroke:0.25px #fff;"><span style="color:#000;">    </span><span style="color:#006400;">text-align</span><span style="color:#000;">: </span><span style="color:#000088;">center</span><span style="color:#000;">;</span></div>
<div style="position:absolute;left:48.21px;top:370.70px;width:99.02px;height:1.1px;background:#006400"></div>
<div style="position:absolute;left:167.03px;top:370.70px;width:59.41px;height:1.1px;background:#000088"></div>
<div style="position:absolute;top:391.50px;font-family:'Liberation Mono';font-size:16.5px;line-height:0;white-space:pre;left:8.60px;-webkit-text-stroke:0.25px #fff;"><span style="color:#000;">}</span></div>
<div style="position:absolute;left:0;top:401.0px;width:414px;height:48.5px;background:linear-gradient(#efefef,#d7d7d7)"></div>
<div style="position:absolute;top:414.70px;font-family:'Liberation Sans';font-size:18px;line-height:0;white-space:pre;font-weight:bold;left:5.80px;color:#000;">Inherited</div>
<div style="position:absolute;top:435.40px;font-family:'Liberation Sans';font-size:18px;line-height:0;white-space:pre;font-weight:bold;left:5.80px;color:#000;">from</div>
<div style="position:absolute;top:437.40px;font-family:'Liberation Mono';font-size:16.5px;line-height:0;white-space:pre;left:48.50px;-webkit-text-stroke:0.25px #e0e0e0;"><span style="color:#0000ff;">li</span><span style="color:#ff0000;">.span12.hikashop_product.hikashop_product_column_1</span></div>
<div style="position:absolute;top:468.40px;font-family:'Liberation Mono';font-size:16.5px;line-height:0;white-space:pre;left:8.60px;-webkit-text-stroke:0.25px #fff;"><span style="color:#000;">li {</span></div>
<div style="position:absolute;top:466.90px;font-family:'Liberation Sans';font-size:16.5px;line-height:0;white-space:pre;font-weight:bold;left:206.92px;color:#0000ff;">bootstrap.min.css (line 9)</div>
<div style="position:absolute;top:489.90px;font-family:'Liberation Mono';font-size:16.5px;line-height:0;white-space:pre;left:8.60px;-webkit-text-stroke:0.25px #fff;"><span style="color:#000;">    </span><span style="color:#006400;">line-height</span><span style="color:#000;">: </span><span style="color:#000088;">20px</span><span style="color:#000;">;</span></div>
<div style="position:absolute;left:48.21px;top:490.00px;width:108.92px;height:1.1px;background:#006400"></div>
<div style="position:absolute;left:176.93px;top:490.00px;width:39.61px;height:1.1px;background:#000088"></div>
<div style="position:absolute;top:510.70px;font-family:'Liberation Mono';font-size:16.5px;line-height:0;white-space:pre;left:8.60px;-webkit-text-stroke:0.25px #fff;"><span style="color:#000;">}</span></div>
<div style="position:absolute;left:0;top:519.8px;width:414px;height:27.800000000000068px;background:linear-gradient(#efefef,#d7d7d7)"></div>
<div style="position:absolute;top:533.70px;font-family:'Liberation Sans';font-size:18px;line-height:0;white-space:pre;font-weight:bold;left:5.80px;color:#000;">Inherited from</div>
<div style="position:absolute;top:535.70px;font-family:'Liberation Mono';font-size:16.5px;line-height:0;white-space:pre;left:131.50px;-webkit-text-stroke:0.25px #e0e0e0;"><span style="color:#0000ff;">ul</span><span style="color:#ff0000;">.thumbnails</span></div>
<div style="position:absolute;top:566.80px;font-family:'Liberation Mono';font-size:16.5px;line-height:0;white-space:pre;left:8.60px;-webkit-text-stroke:0.25px #fff;"><span style="color:#000;">.thumbnails {</span></div>
<div style="position:absolute;top:565.30px;font-family:'Liberation Sans';font-size:16.5px;line-height:0;white-space:pre;font-weight:bold;left:186.67px;color:#0000ff;">fronten...4486022 (line 2552)</div>
<div style="position:absolute;top:587.60px;font-family:'Liberation Mono';font-size:16.5px;line-height:0;white-space:pre;left:8.60px;-webkit-text-stroke:0.25px #fff;"><span style="color:#000;">    </span><span style="color:#006400;">list-style</span><span style="color:#000;">: </span><span style="color:#000088;">outside none none</span><span style="color:#000;">;</span></div>
<div style="position:absolute;top:609.00px;font-family:'Liberation Mono';font-size:16.5px;line-height:0;white-space:pre;left:8.60px;-webkit-text-stroke:0.25px #fff;"><span style="color:#000;">}</span></div>
<div style="position:absolute;top:637.90px;font-family:'Liberation Mono';font-size:16.5px;line-height:0;white-space:pre;left:8.60px;-webkit-text-stroke:0.25px #fff;"><span style="color:#000;">.thumbnails {</span></div>
<div style="position:absolute;top:636.40px;font-family:'Liberation Sans';font-size:16.5px;line-height:0;white-space:pre;font-weight:bold;left:206.92px;color:#0000ff;">bootstrap.min.css (line 9)</div>
<div style="position:absolute;top:658.60px;font-family:'Liberation Mono';font-size:16.5px;line-height:0;white-space:pre;left:8.60px;-webkit-text-stroke:0.25px #fff;"><span style="color:#000;">    </span><span style="color:#006400;">list-style</span><span style="color:#000;">: </span><span style="color:#000088;">outside none none</span><span style="color:#000;">;</span></div>
<div style="position:absolute;left:48.21px;top:658.70px;width:99.02px;height:1.1px;background:#006400"></div>
<div style="position:absolute;left:167.03px;top:658.70px;width:168.33px;height:1.1px;background:#000088"></div>
<div style="position:absolute;top:679.50px;font-family:'Liberation Mono';font-size:16.5px;line-height:0;white-space:pre;left:8.60px;-webkit-text-stroke:0.25px #fff;"><span style="color:#000;">}</span></div>
<div style="position:absolute;left:0;top:689.1px;width:414px;height:27.699999999999932px;background:linear-gradient(#efefef,#d7d7d7)"></div>
<div style="position:absolute;top:702.60px;font-family:'Liberation Sans';font-size:18px;line-height:0;white-space:pre;font-weight:bold;left:5.80px;color:#000;">Inherited from</div>
<div style="position:absolute;top:704.60px;font-family:'Liberation Mono';font-size:16.5px;line-height:0;white-space:pre;left:131.50px;-webkit-text-stroke:0.25px #e0e0e0;"><span style="color:#0000ff;">div</span><span style="color:#ff0000;">.span3.right_side</span></div>
<div style="position:absolute;top:735.70px;font-family:'Liberation Mono';font-size:16.5px;line-height:0;white-space:pre;left:8.60px;-webkit-text-stroke:0.25px #fff;"><span style="color:#000;">.right_side {</span></div>
<div style="position:absolute;top:734.20px;font-family:'Liberation Sans';font-size:16.5px;line-height:0;white-space:pre;font-weight:bold;left:239.92px;color:#0000ff;">custom.css (line 543)</div>
<div style="position:absolute;top:756.40px;font-family:'Liberation Mono';font-size:16.5px;line-height:0;white-space:pre;left:8.60px;-webkit-text-stroke:0.25px #fff;"><span style="color:#000;">    </span><span style="color:#006400;">text-shadow</span><span style="color:#000;">: </span><span style="color:#000088;">none</span><span style="color:#000;">;</span></div>
<div style="position:absolute;top:777.50px;font-family:'Liberation Mono';font-size:16.5px;line-height:0;white-space:pre;left:8.60px;-webkit-text-stroke:0.25px #fff;"><span style="color:#000;">}</span></div>
<div style="position:absolute;left:0;top:787.0px;width:414px;height:27.5px;background:linear-gradient(#efefef,#d7d7d7)"></div>
<div style="position:absolute;top:800.30px;font-family:'Liberation Sans';font-size:18px;line-height:0;white-space:pre;font-weight:bold;left:5.80px;color:#000;">Inherited from</div>
<div style="position:absolute;top:802.30px;font-family:'Liberation Mono';font-size:16.5px;line-height:0;white-space:pre;left:131.50px;-webkit-text-stroke:0.25px #e0e0e0;"><span style="color:#0000ff;">body</span></div>
<div style="position:absolute;top:833.70px;font-family:'Liberation Mono';font-size:16.5px;line-height:0;white-space:pre;left:8.60px;-webkit-text-stroke:0.25px #fff;"><span style="color:#000;">body {</span></div>
<div style="position:absolute;top:832.20px;font-family:'Liberation Sans';font-size:16.5px;line-height:0;white-space:pre;font-weight:bold;left:258.30px;color:#0000ff;">custom.css (line 7)</div>
<div style="position:absolute;top:854.70px;font-family:'Liberation Mono';font-size:16.5px;line-height:0;white-space:pre;left:8.60px;-webkit-text-stroke:0.25px #fff;"><span style="color:#000;">    </span><span style="color:#006400;">font-family</span><span style="color:#000;">:</span></div>
<div style="position:absolute;top:877.80px;font-family:'Liberation Mono';font-size:16.5px;line-height:0;white-space:pre;left:8.60px;-webkit-text-stroke:0.25px #fff;"><span style="color:#000;">     </span><span style="color:#808080;">ubuntu,Arial,Helvetica,sans-serif;</span></div>
<div style="position:absolute;top:898.50px;font-family:'Liberation Mono';font-size:16.5px;line-height:0;white-space:pre;left:8.60px;-webkit-text-stroke:0.25px #fff;"><span style="color:#000;">}</span></div>
</div>
<div style="position:absolute;left:1372px;top:98px;width:1px;height:916px;background:#fff;"></div>
<div style="position:absolute;left:1373px;top:98px;width:24px;height:916px;background:#f0f0f0;"></div>
<div style="position:absolute;left:1373px;top:124px;width:24px;height:875px;background:#cdcdcd;"></div>
<svg style="position:absolute;left:1373px;top:98px" width="24" height="26" viewBox="1373 98 24 26"><polygon points="1380,117 1380,113.6 1385.5,108 1391,113.6 1391,117 1385.5,111.6" fill="#5a5a5a"/></svg>
<div style="position:absolute;left:1397px;top:0px;width:10px;height:1014px;background:#eaeaea;"></div>
<div style="position:absolute;left:1395px;top:0px;width:2px;height:1px;background:#555;"></div>
<div style="position:absolute;left:1407px;top:0px;width:1px;height:1014px;background:#cfcfcf;"></div>
<div style="position:absolute;left:1408px;top:0px;width:143px;height:66px;background:#dedede;"></div>
<svg style="position:absolute;left:1408px;top:0" width="143" height="66" viewBox="1408 0 143 66">
<circle cx="1415.5" cy="15.3" r="7" fill="#c3c3c3"/><circle cx="1417.8" cy="12.8" r="2.6" fill="#f4f4f4"/>
<circle cx="1476.6" cy="22.7" r="17" fill="#c3c3c3"/><circle cx="1484" cy="16" r="5.2" fill="#f2f2f2"/>
<ellipse cx="1432" cy="0" rx="4" ry="4" fill="#c8c8c8"/>
<ellipse cx="1420" cy="-1" rx="7" ry="3" fill="#c8c8c8"/>
<circle cx="1548.5" cy="19" r="5.5" fill="#c6c6c6"/>
</svg>
<div style="position:absolute;left:1408px;top:49px;width:133px;height:17px;background:#fff;border-top:1px solid #98a8bb;border-right:1px solid #98a8bb;box-sizing:border-box;"></div>
<div style="position:absolute;left:1551px;top:0px;width:349px;height:66px;background:#646464;"></div>
<div style="position:absolute;left:1408px;top:66px;width:143px;height:1px;background:#d2d2d2;"></div>
<div style="position:absolute;left:1408px;top:66px;width:492px;height:68px;background:#eaeaea;"></div>
<div style="position:absolute;left:1878px;top:86px;width:16px;height:2.5px;background:#111;"></div>
<div style="position:absolute;left:1408px;top:134px;width:492px;height:1px;background:#a3acb8;"></div>
<div style="position:absolute;left:1408px;top:135px;width:492px;height:96px;background:linear-gradient(#f4f4f4,#efefef);"></div>
<div style="position:absolute;left:1408px;top:231px;width:492px;height:1px;background:#9c9c9c;"></div>
<div style="position:absolute;left:1408px;top:148px;width:171px;height:35px;background:#fff;border:1px solid #a3b2c4;border-left:none;box-sizing:border-box;"></div>
<svg style="position:absolute;left:1545px;top:150px" width="30" height="30" viewBox="1545 150 30 30">
<circle cx="1564.2" cy="162.3" r="5.3" fill="none" stroke="#3a78b8" stroke-width="2.3"/>
<line x1="1560.5" y1="166" x2="1552.7" y2="173.8" stroke="#3a78b8" stroke-width="2.8"/>
</svg>
<svg style="position:absolute;left:1590px;top:145px" width="300" height="40" viewBox="1590 145 300 40">
<polygon points="1610.3,155.5 1613.2,161.8 1620.2,162.5 1615,167.2 1616.4,174 1610.3,170.6 1604.2,174 1605.6,167.2 1600.4,162.5 1607.4,161.8" fill="none" stroke="#777a80" stroke-width="2.4" stroke-linejoin="round"/>
<rect x="1633" y="154" width="1" height="24" fill="#b9c2cc"/>
<rect x="1645" y="158.5" width="19.5" height="17" rx="3" fill="#777a80"/>
<polygon points="1650.5,159 1654.7,154.3 1658.9,159" fill="#777a80"/>
<rect x="1647.8" y="161.2" width="2.4" height="2.5" fill="#f2f2f2"/><rect x="1651.4" y="161.2" width="10.4" height="2.5" fill="#f2f2f2"/>
<rect x="1647.8" y="165.4" width="2.4" height="2.5" fill="#f2f2f2"/><rect x="1651.4" y="165.4" width="10.4" height="2.5" fill="#f2f2f2"/>
<rect x="1647.8" y="169.6" width="2.4" height="2.5" fill="#f2f2f2"/><rect x="1651.4" y="169.6" width="10.4" height="2.5" fill="#f2f2f2"/>
<polygon points="1702.8,155 1709.8,155 1709.8,166.5 1716.8,166.5 1706.3,176 1695.8,166.5 1702.8,166.5" fill="#777a80"/>
<polygon points="1759.3,154.7 1771,165.3 1769.4,166.4 1759.3,157.4 1749.2,166.4 1747.6,165.3" fill="#777a80"/>
<polygon points="1759.3,159.3 1767,166 1767,175.8 1761.8,175.8 1761.8,168.6 1756.8,168.6 1756.8,175.8 1751.6,175.8 1751.6,166" fill="#777a80"/>
<polygon points="1822.6,154.7 1822.6,173.2 1815.8,170 1813.8,177.5 1810.5,170.5 1802.5,170.3" fill="#777a80"/>
<polyline points="1821,157.5 1811,170.5 1813.6,176" fill="none" stroke="#f2f2f2" stroke-width="0.9"/>
</svg>
<svg style="position:absolute;left:1855px;top:152px" width="22" height="28" viewBox="1855 152 22 28">
<defs><linearGradient id="er" x1="0" y1="0" x2="0" y2="1"><stop offset="0" stop-color="#f48a78"/><stop offset="0.6" stop-color="#ee6a55"/><stop offset="1" stop-color="#b8321c"/></linearGradient>
<linearGradient id="eb" x1="0" y1="0" x2="0" y2="1"><stop offset="0" stop-color="#4aa0ef"/><stop offset="1" stop-color="#1f64c0"/></linearGradient></defs>
<rect x="1857.3" y="154.2" width="16" height="23.5" rx="4.5" fill="url(#er)"/>
<path d="M1857.6,160.5 L1857.6,158.5 Q1857.6,154.2 1862,154.2 L1868.6,154.2 Q1873,154.2 1873,158.5 L1873,160.5 Z" fill="url(#eb)"/>
</svg>
<div style="position:absolute;left:1408px;top:232px;width:492px;height:782px;background:#fff;"></div>
<div style="position:absolute;left:1440px;top:241px;width:458px;height:780px;background:#fff;border-radius:8px;box-shadow:0 0 10px rgba(0,0,0,0.13);"></div>
<div style="position:absolute;left:1444px;top:245px;width:449px;height:780px;background:#80b199;border-radius:6px;"></div>
<div style="position:absolute;top:291.50px;font-family:'Liberation Sans';font-size:28px;line-height:0;white-space:pre;left:1457.40px;color:#333;transform:scaleX(1.1271);transform-origin:0 0;-webkit-text-stroke:0.5px #333;">Support our work</div>
<div style="position:absolute;left:1456.5px;top:335px;width:403.5px;height:673px;background:#fff;"></div>
<div style="position:absolute;left:1473px;top:351px;width:371px;height:595.5px;background:#fff;border-radius:5px;box-shadow:0 1px 4px rgba(0,0,0,0.22);"></div>
<svg style="position:absolute;left:1530px;top:480px" width="210" height="220" viewBox="1530 480 210 220">
<defs>
<linearGradient id="tray" x1="0" y1="0" x2="1" y2="1"><stop offset="0" stop-color="#fafaf9"/><stop offset="0.7" stop-color="#f0f0ed"/><stop offset="1" stop-color="#dcdcd7"/></linearGradient>
<linearGradient id="trayin" x1="0" y1="0" x2="1" y2="1"><stop offset="0" stop-color="#e6e6e2"/><stop offset="1" stop-color="#f2f2ef"/></linearGradient>
<radialGradient id="coin" cx="0.45" cy="0.4" r="0.65"><stop offset="0" stop-color="#c4b060"/><stop offset="0.8" stop-color="#a59242"/><stop offset="1" stop-color="#857230"/></radialGradient>
<filter id="soft"><feGaussianBlur stdDeviation="0.5"/></filter>
</defs>
<g filter="url(#soft)">
<polygon points="1550.6,566.8 1666.7,531 1718.7,629.7 1586.4,683.9" fill="url(#tray)"/>
<polygon points="1550.6,566.8 1666.7,531 1718.7,629.7 1586.4,683.9" fill="none" stroke="#d8d8d2" stroke-width="1"/>
<polygon points="1575,586 1650,558 1690,625 1602,660" fill="url(#trayin)"/>
<polygon points="1656,560 1666.7,531 1718.7,629.7 1690,625" fill="#e2e2de"/>
<polygon points="1588,596 1610,588 1626,645 1606,652" fill="#d6a9c6"/>
<polygon points="1600,600 1667,577.6 1685,613.4 1635.5,627 1612,640" fill="#e27a4e"/>
<polygon points="1598,583 1656,564 1664.5,591 1613.5,606.5" fill="#a9a9a5"/>
<polygon points="1606,586 1650,570 1657,589 1616,602" fill="#e2e2dc"/>
<ellipse cx="1634" cy="587" rx="14" ry="7" transform="rotate(-20 1634 587)" fill="#5e5e5a"/>
<text x="0" y="0" transform="translate(1660,592) rotate(68)" font-family="Liberation Sans" font-size="20" fill="#5a1a14">20</text>
<circle cx="1614.6" cy="623.2" r="11.5" fill="url(#coin)"/>
<circle cx="1642.8" cy="619.9" r="11.5" fill="url(#coin)"/>
<circle cx="1641.7" cy="638.4" r="10.5" fill="url(#coin)"/>
<circle cx="1664.5" cy="630.8" r="9" fill="url(#coin)"/>
<circle cx="1623" cy="645" r="12.5" fill="url(#coin)"/>
<polygon points="1560.4,516.9 1636.3,493 1654.7,560.3 1581,586.3" fill="#f5efb4"/>
<g transform="translate(1583,560) rotate(-42)" font-family="Liberation Sans" font-size="11.5" fill="#1e1e1e" style="letter-spacing:0.3px">
<text x="0" y="0" transform="scale(0.85,1)">PLEASE</text><text x="2" y="15" transform="scale(0.85,1)">DONATE!</text></g>
<line x1="1606" y1="570" x2="1638" y2="541" stroke="#2a2a2a" stroke-width="1.3"/>
<line x1="1611" y1="574" x2="1642" y2="546" stroke="#2a2a2a" stroke-width="1.3"/>
</g>
</svg>
<div style="position:absolute;top:835.40px;font-family:'Liberation Sans';font-size:20px;line-height:0;white-space:pre;left:1490.40px;color:#555;transform:scaleX(1.0784);transform-origin:0 0;-webkit-text-stroke:0.3px #555;">Please enter your donation amount</div>
<div style="position:absolute;top:865.20px;font-family:'Liberation Sans';font-size:20px;line-height:0;white-space:pre;left:1637.00px;color:#555;transform:scaleX(1.0750);transform-origin:0 0;-webkit-text-stroke:0.3px #555;">here</div>
<div style="position:absolute;left:1570px;top:886px;width:176px;height:38px;background:linear-gradient(#ffffff,#e6e6e6);border:1px solid #cfcfcf;border-radius:4px;box-sizing:border-box;"></div>
<div style="position:absolute;top:905.60px;font-family:'Liberation Sans';font-size:20px;line-height:0;white-space:pre;left:1606.00px;color:#555;transform:scaleX(1.0853);transform-origin:0 0;-webkit-text-stroke:0.3px #555;">Add to cart</div>
<div style="position:absolute;left:1444px;top:1008px;width:449px;height:6px;background:#80b199;"></div>
</body></html>
